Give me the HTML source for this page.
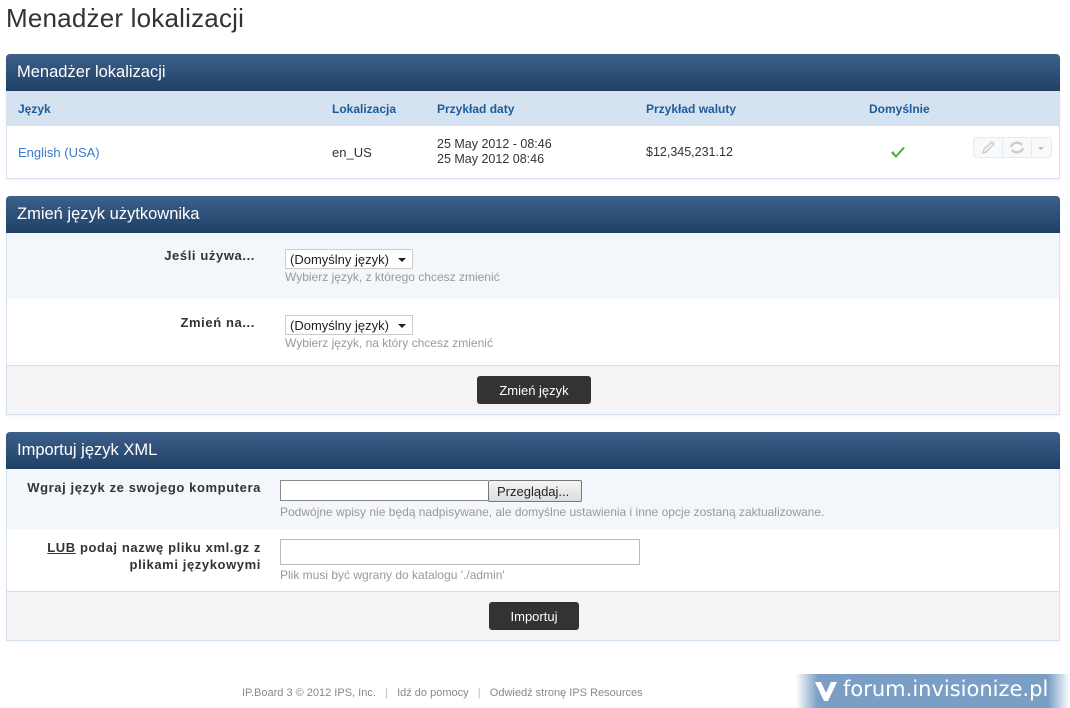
<!DOCTYPE html>
<html><head><meta charset="utf-8"><style>
*{box-sizing:border-box;margin:0;padding:0}
body{width:1070px;height:708px;background:#fff;font-family:"Liberation Sans",Arial,sans-serif;font-size:12px;color:#333;position:relative;overflow:hidden}
.a{position:absolute}
h1{position:absolute;left:6px;top:3px;font-size:26px;font-weight:normal;color:#333;letter-spacing:0.2px}
.panel{position:absolute;left:6px;width:1054px;border:1px solid #d5e2f0;border-top:none;border-radius:4px 4px 0 0;background:#fff;box-shadow:0 1px 2px rgba(0,0,0,.06)}
.hd{position:absolute;left:-1px;right:-1px;top:0;height:37px;background:linear-gradient(#3e6189,#1f3f66);border-radius:4px 4px 0 0;color:#fff;font-size:16.5px;padding:9px 0 0 11px}
.th{position:absolute;color:#1d5c9a;font-weight:bold;font-size:12px}
.lbl{position:absolute;font-weight:bold;font-size:13px;letter-spacing:0.6px;color:#333;text-align:right}
.desc{position:absolute;font-size:12px;color:#999}
.sel{position:absolute;height:20px;width:128px;border:1px solid #ccc;background:#fff;font-size:13px;padding:2px 0 0 4px;color:#222}
.sel:after{content:"";position:absolute;right:6px;top:8px;border:4px solid transparent;border-top:4px solid #222;border-bottom:none}
.btn{position:absolute;background:#333;color:#fff;font-size:13px;text-align:center;border-radius:3px;height:28px;padding-top:7px}
.ft{position:absolute;left:0;right:0;background:#f4f4f4;border-top:1px solid #ddd}
</style></head><body>
<h1>Menadżer lokalizacji</h1>

<div class="panel" style="top:54px;height:125px">
<div class="hd">Menadżer lokalizacji</div>
<div class="a" style="left:0;right:0;top:37px;height:35px;background:#d5e2f0"></div>
<div class="th" style="left:11px;top:48px">Język</div>
<div class="th" style="left:325px;top:48px">Lokalizacja</div>
<div class="th" style="left:430px;top:48px">Przykład daty</div>
<div class="th" style="left:639px;top:48px">Przykład waluty</div>
<div class="th" style="left:862px;top:48px">Domyślnie</div>
<div class="a" style="left:11px;top:91px;color:#3a7bc8;font-size:13px">English (USA)</div>
<div class="a" style="left:325px;top:91px;font-size:13px">en_US</div>
<div class="a" style="left:430px;top:83px;font-size:12.5px;line-height:15px">25 May 2012 - 08:46<br>25 May 2012 08:46</div>
<div class="a" style="left:639px;top:91px;font-size:12.5px">$12,345,231.12</div>
<svg class="a" style="left:883px;top:92px" width="16" height="14" viewBox="0 0 16 14"><path d="M1 7 L6 12 L15 2 L13 1 L6 9 L3 5 Z" fill="#5aad4a"/></svg>
<div class="a" style="left:966px;top:83px;width:79px;height:21px;border:1px solid #e2eaf3;border-radius:4px;background:#f7f9fb"></div>
<div class="a" style="left:995px;top:83px;width:1px;height:21px;background:#e2eaf3"></div>
<div class="a" style="left:1024px;top:83px;width:1px;height:21px;background:#e2eaf3"></div>
<svg class="a" style="left:973px;top:86px" width="16" height="15"><path d="M3 13 L4 9 L12 2 L14 4 L6 12 Z" fill="none" stroke="#ccc" stroke-width="1.5"/></svg>
<svg class="a" style="left:1002px;top:86px" width="16" height="15"><path d="M2 7 A6 5 0 0 1 13 5 M14 8 A6 5 0 0 1 3 10" fill="none" stroke="#ccc" stroke-width="2.5"/></svg>
<div class="a" style="left:1031px;top:93px;border:3px solid transparent;border-top:3px solid #bbb"></div>
</div>

<div class="panel" style="top:196px;height:219px">
<div class="hd">Zmień język użytkownika</div>
<div class="a" style="left:0;right:0;top:37px;height:66px;background:#f3f6fa"></div>
<div class="lbl" style="left:0;width:248px;top:52px">Jeśli używa...</div>
<div class="sel" style="left:278px;top:53px">(Domyślny język)</div>
<div class="desc" style="left:278px;top:74px">Wybierz język, z którego chcesz zmienić</div>
<div class="lbl" style="left:0;width:248px;top:119px">Zmień na...</div>
<div class="sel" style="left:278px;top:119px">(Domyślny język)</div>
<div class="desc" style="left:278px;top:140px">Wybierz język, na który chcesz zmienić</div>
<div class="ft" style="top:169px;height:49px"></div>
<div class="btn" style="left:470px;top:180px;width:114px">Zmień język</div>
</div>

<div class="panel" style="top:432px;height:209px">
<div class="hd">Importuj język XML</div>
<div class="a" style="left:0;right:0;top:37px;height:60px;background:#f3f6fa"></div>
<div class="lbl" style="left:0;width:254px;top:48px">Wgraj język ze swojego komputera</div>
<div class="a" style="left:273px;top:48px;width:208px;height:21px;border:1px solid #888;border-right:none;background:#fff"></div>
<div class="a" style="left:481px;top:48px;width:94px;height:22px;border:1px solid #777;border-radius:2px;background:linear-gradient(#f4f4f4,#ddd);font-size:13px;padding:3px 0 0 8px;color:#222">Przeglądaj...</div>
<div class="desc" style="left:273px;top:73px">Podwójne wpisy nie będą nadpisywane, ale domyślne ustawienia i inne opcje zostaną zaktualizowane.</div>
<div class="lbl" style="left:0;width:254px;top:107px;line-height:17px"><u>LUB</u> podaj nazwę pliku xml.gz z<br>plikami językowymi</div>
<div class="a" style="left:273px;top:107px;width:360px;height:26px;border:1px solid #bbb;background:#fff"></div>
<div class="desc" style="left:273px;top:136px">Plik musi być wgrany do katalogu './admin'</div>
<div class="ft" style="top:159px;height:49px"></div>
<div class="btn" style="left:482px;top:170px;width:90px">Importuj</div>
</div>

<div class="a" style="left:242px;top:687px;font-size:11px;color:#888">IP.Board 3 © 2012 IPS, Inc. &nbsp; <span style="color:#bbb">|</span> &nbsp; Idź do pomocy &nbsp; <span style="color:#bbb">|</span> &nbsp; Odwiedź stronę IPS Resources</div>

<div class="a" style="left:796px;top:674px;width:274px;height:34px;background:linear-gradient(90deg,rgba(120,155,195,0),#7b9ec5 8%,#7b9ec5 92%,rgba(120,155,195,0));"></div>
<svg class="a" style="left:814px;top:680px" width="24" height="22"><path d="M1 2 L7 2 L12 13 L17 2 L23 2 L14 21 L10 21 Z" fill="#fff"/></svg>
<div class="a" style="left:843px;top:677px;font-family:'DejaVu Sans',sans-serif;font-size:21px;color:#fff">forum.invisionize.pl</div>
</body></html>
